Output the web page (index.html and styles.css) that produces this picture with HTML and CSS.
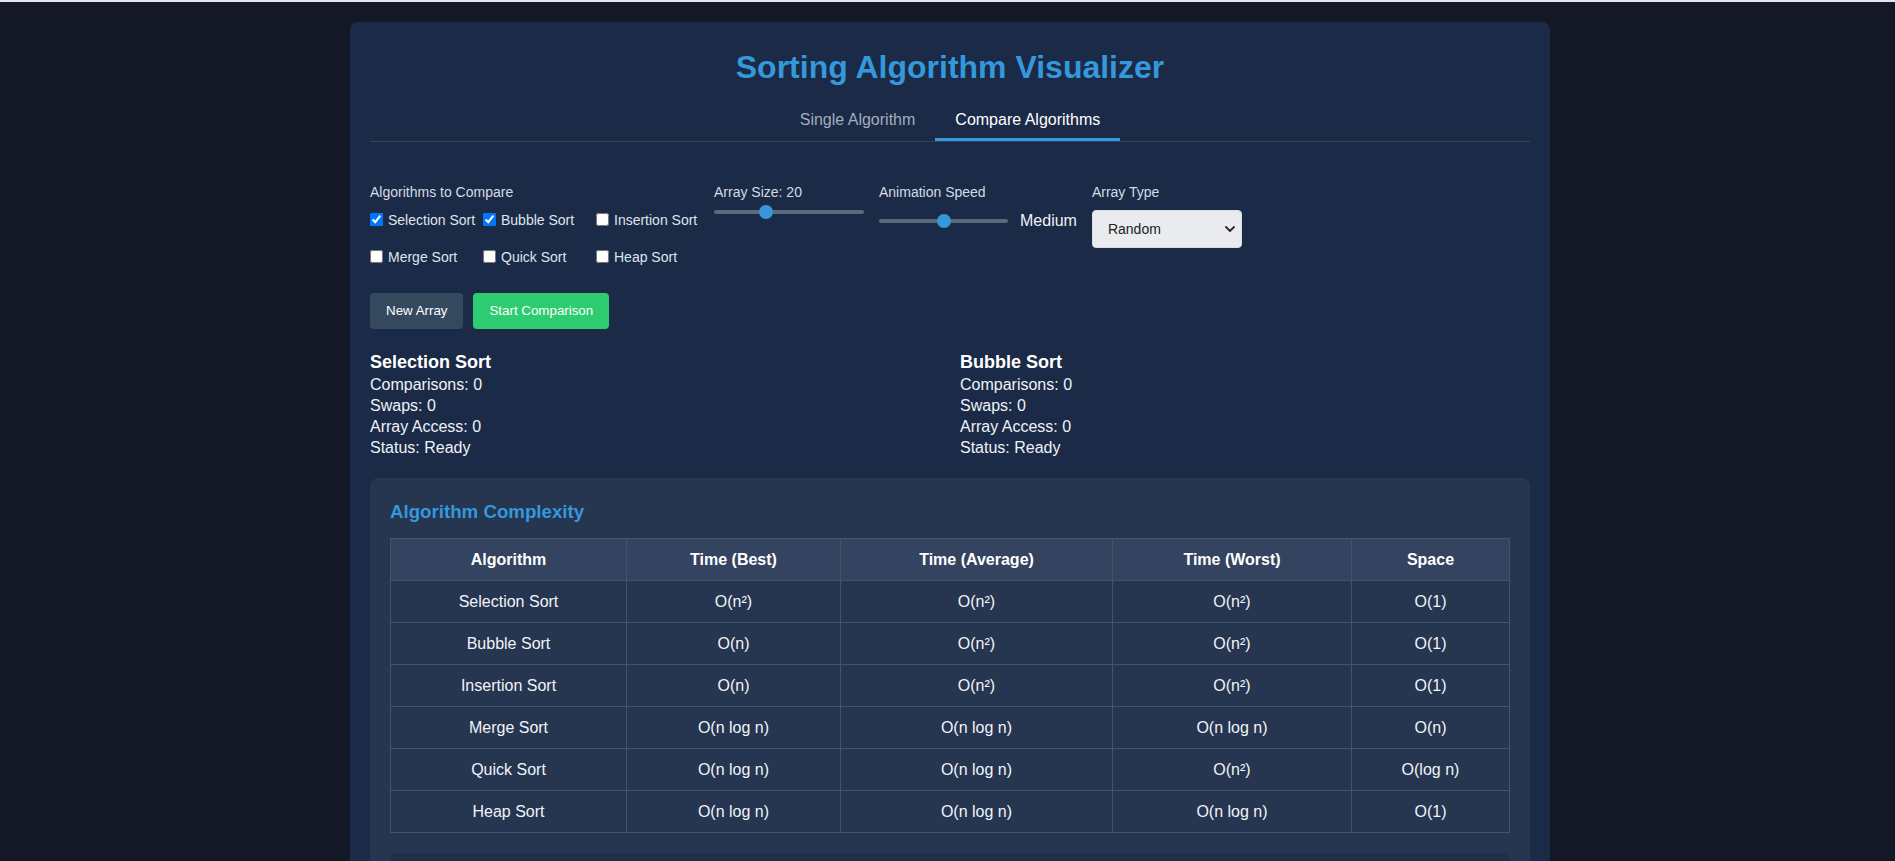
FILE: index.html
```html
<!DOCTYPE html>
<html lang="en">
<head>
<meta charset="utf-8">
<title>Sorting Algorithm Visualizer</title>
<link rel="stylesheet" href="styles.css">
</head>
<body>
<div class="container">
  <h1 class="title">Sorting Algorithm Visualizer</h1>
  <div class="tabs">
    <button class="tab">Single Algorithm</button>
    <button class="tab active">Compare Algorithms</button>
  </div>

  <div class="controls">
    <div class="group group-algos">
      <span class="group-label">Algorithms to Compare</span>
      <div class="check-grid">
        <label class="check"><input type="checkbox" checked><span>Selection Sort</span></label>
        <label class="check"><input type="checkbox" checked><span>Bubble Sort</span></label>
        <label class="check"><input type="checkbox"><span>Insertion Sort</span></label>
        <label class="check"><input type="checkbox"><span>Merge Sort</span></label>
        <label class="check"><input type="checkbox"><span>Quick Sort</span></label>
        <label class="check"><input type="checkbox"><span>Heap Sort</span></label>
      </div>
    </div>
    <div class="group">
      <span class="group-label">Array Size: 20</span>
      <input type="range" class="range range-size" min="5" max="50" value="20">
    </div>
    <div class="group">
      <span class="group-label">Animation Speed</span>
      <div class="speed-row">
        <input type="range" class="range range-speed" min="1" max="3" value="2">
        <span class="speed-value">Medium</span>
      </div>
    </div>
    <div class="group">
      <span class="group-label">Array Type</span>
      <div class="select-wrap">
        <select class="select">
          <option>Random</option>
          <option>Nearly Sorted</option>
          <option>Reversed</option>
          <option>Few Unique</option>
        </select>
        <svg class="chevron" width="10" height="6" viewBox="0 0 10 6"><path d="M1 1l4 4 4-4" fill="none" stroke="#2b2b2b" stroke-width="1.8" stroke-linecap="round" stroke-linejoin="round"/></svg>
      </div>
    </div>
  </div>

  <div class="buttons">
    <button class="btn btn-dark">New Array</button>
    <button class="btn btn-green">Start Comparison</button>
  </div>

  <div class="stats">
    <div class="stat-card">
      <h3 class="stat-title">Selection Sort</h3>
      <div class="stat-line">Comparisons: 0</div>
      <div class="stat-line">Swaps: 0</div>
      <div class="stat-line">Array Access: 0</div>
      <div class="stat-line">Status: Ready</div>
    </div>
    <div class="stat-card">
      <h3 class="stat-title">Bubble Sort</h3>
      <div class="stat-line">Comparisons: 0</div>
      <div class="stat-line">Swaps: 0</div>
      <div class="stat-line">Array Access: 0</div>
      <div class="stat-line">Status: Ready</div>
    </div>
  </div>

  <div class="complexity">
    <h3 class="complexity-title">Algorithm Complexity</h3>
    <table class="table">
      <thead>
        <tr><th>Algorithm</th><th>Time (Best)</th><th>Time (Average)</th><th>Time (Worst)</th><th>Space</th></tr>
      </thead>
      <tbody>
        <tr><td>Selection Sort</td><td>O(n²)</td><td>O(n²)</td><td>O(n²)</td><td>O(1)</td></tr>
        <tr><td>Bubble Sort</td><td>O(n)</td><td>O(n²)</td><td>O(n²)</td><td>O(1)</td></tr>
        <tr><td>Insertion Sort</td><td>O(n)</td><td>O(n²)</td><td>O(n²)</td><td>O(1)</td></tr>
        <tr><td>Merge Sort</td><td>O(n log n)</td><td>O(n log n)</td><td>O(n log n)</td><td>O(n)</td></tr>
        <tr><td>Quick Sort</td><td>O(n log n)</td><td>O(n log n)</td><td>O(n²)</td><td>O(log n)</td></tr>
        <tr><td>Heap Sort</td><td>O(n log n)</td><td>O(n log n)</td><td>O(n log n)</td><td>O(1)</td></tr>
      </tbody>
    </table>
    <div class="info-box"></div>
  </div>
</div>
</body>
</html>
```

FILE: styles.css
```css
html {
  border-top: 2px solid #e3e5e8;
  background: #131726;
}

body {
  margin: 0;
  padding: 20px 0 20px 5px;
  background: #131726;
  font-family: "Liberation Sans", Arial, sans-serif;
  color: #ecf0f4;
}

.container {
  width: 1200px;
  margin: 0 auto;
  box-sizing: border-box;
  padding: 20px;
  background: #1b2a47;
  border-radius: 8px;
}

.title {
  margin: 4px 0 0;
  font-size: 32px;
  line-height: 42px;
  font-weight: bold;
  text-align: center;
  color: #3498db;
}

.tabs {
  margin-top: 10px;
  display: flex;
  justify-content: center;
  border-bottom: 1px solid #34435e;
}

.tab {
  background: none;
  border: none;
  border-bottom: 3px solid transparent;
  padding: 13px 20px 9px;
  font-family: "Liberation Sans", Arial, sans-serif;
  font-size: 16px;
  line-height: 18px;
  color: #a3adbd;
  cursor: pointer;
}

.tab.active {
  color: #ffffff;
  border-bottom-color: #3498db;
}

.controls {
  margin-top: 41px;
  display: flex;
  align-items: flex-start;
  gap: 15px;
}

.group {
  display: flex;
  flex-direction: column;
}

.group-label {
  display: block;
  font-size: 14px;
  line-height: 19px;
  margin-bottom: 8px;
  color: #d5dbe4;
}

.check-grid {
  display: grid;
  grid-template-columns: repeat(3, 103px);
  column-gap: 10px;
  row-gap: 18px;
}

.check {
  display: flex;
  align-items: center;
  height: 19px;
  font-size: 14px;
  color: #dfe5ec;
  white-space: nowrap;
}

.check input {
  margin: 0 5px 0 0;
  width: 13px;
  height: 13px;
}

.range {
  -webkit-appearance: none;
  appearance: none;
  margin: 0;
  height: 4px;
  border-radius: 2px;
  background: #5c687c;
  outline: none;
}

.range::-webkit-slider-thumb {
  -webkit-appearance: none;
  appearance: none;
  width: 14px;
  height: 14px;
  border-radius: 50%;
  background: #3498db;
  border: none;
}

.range-size {
  width: 150px;
}

.range-speed {
  width: 129px;
}

.speed-row {
  display: flex;
  align-items: center;
  gap: 12px;
}

.speed-value {
  font-size: 16px;
  line-height: 21px;
  color: #eef2f6;
}

.select-wrap {
  position: relative;
  width: 150px;
}

.select {
  -webkit-appearance: none;
  appearance: none;
  width: 150px;
  height: 38px;
  padding: 0 15px;
  border: 1px solid #d9dce1;
  border-radius: 4px;
  background: #e9ebee;
  font-family: "Liberation Sans", Arial, sans-serif;
  font-size: 14px;
  color: #222;
}

.chevron {
  position: absolute;
  right: 7px;
  top: 16px;
  pointer-events: none;
}

.buttons {
  margin-top: 27px;
  display: flex;
  gap: 10px;
}

.btn {
  border: none;
  border-radius: 4px;
  padding: 10px 16px;
  font-family: "Liberation Sans", Arial, sans-serif;
  font-size: 13.33px;
  line-height: 16px;
  color: #ffffff;
  cursor: pointer;
}

.btn-dark {
  background: #34495e;
}

.btn-green {
  background: #2ecc71;
}

.stats {
  margin-top: 21px;
  display: grid;
  grid-template-columns: 1fr 1fr;
  column-gap: 20px;
}

.stat-title {
  margin: 0;
  font-size: 18px;
  line-height: 24px;
  font-weight: bold;
  color: #ffffff;
}

.stat-line {
  font-size: 16px;
  line-height: 21px;
  color: #eef2f6;
}

.complexity {
  margin-top: 20px;
  background: #263550;
  border-radius: 8px;
  padding: 20px;
}

.complexity-title {
  margin: 1px 0 14px;
  font-size: 18.7px;
  line-height: 25px;
  font-weight: bold;
  color: #3498db;
}

.table {
  width: 100%;
  border-collapse: collapse;
  table-layout: fixed;
}

.table th,
.table td {
  border: 1px solid #44536d;
  padding: 10px;
  font-size: 16px;
  line-height: 21px;
  text-align: center;
  color: #f1f4f8;
}

.table th {
  background: #334360;
  font-weight: bold;
  color: #ffffff;
}

.table th:nth-child(1) { width: 215px; }
.table th:nth-child(2) { width: 193px; }
.table th:nth-child(3) { width: 251px; }
.table th:nth-child(4) { width: 218px; }

.info-box {
  margin-top: 20px;
  height: 300px;
  background: #222f48;
  border-radius: 8px;
}
```
